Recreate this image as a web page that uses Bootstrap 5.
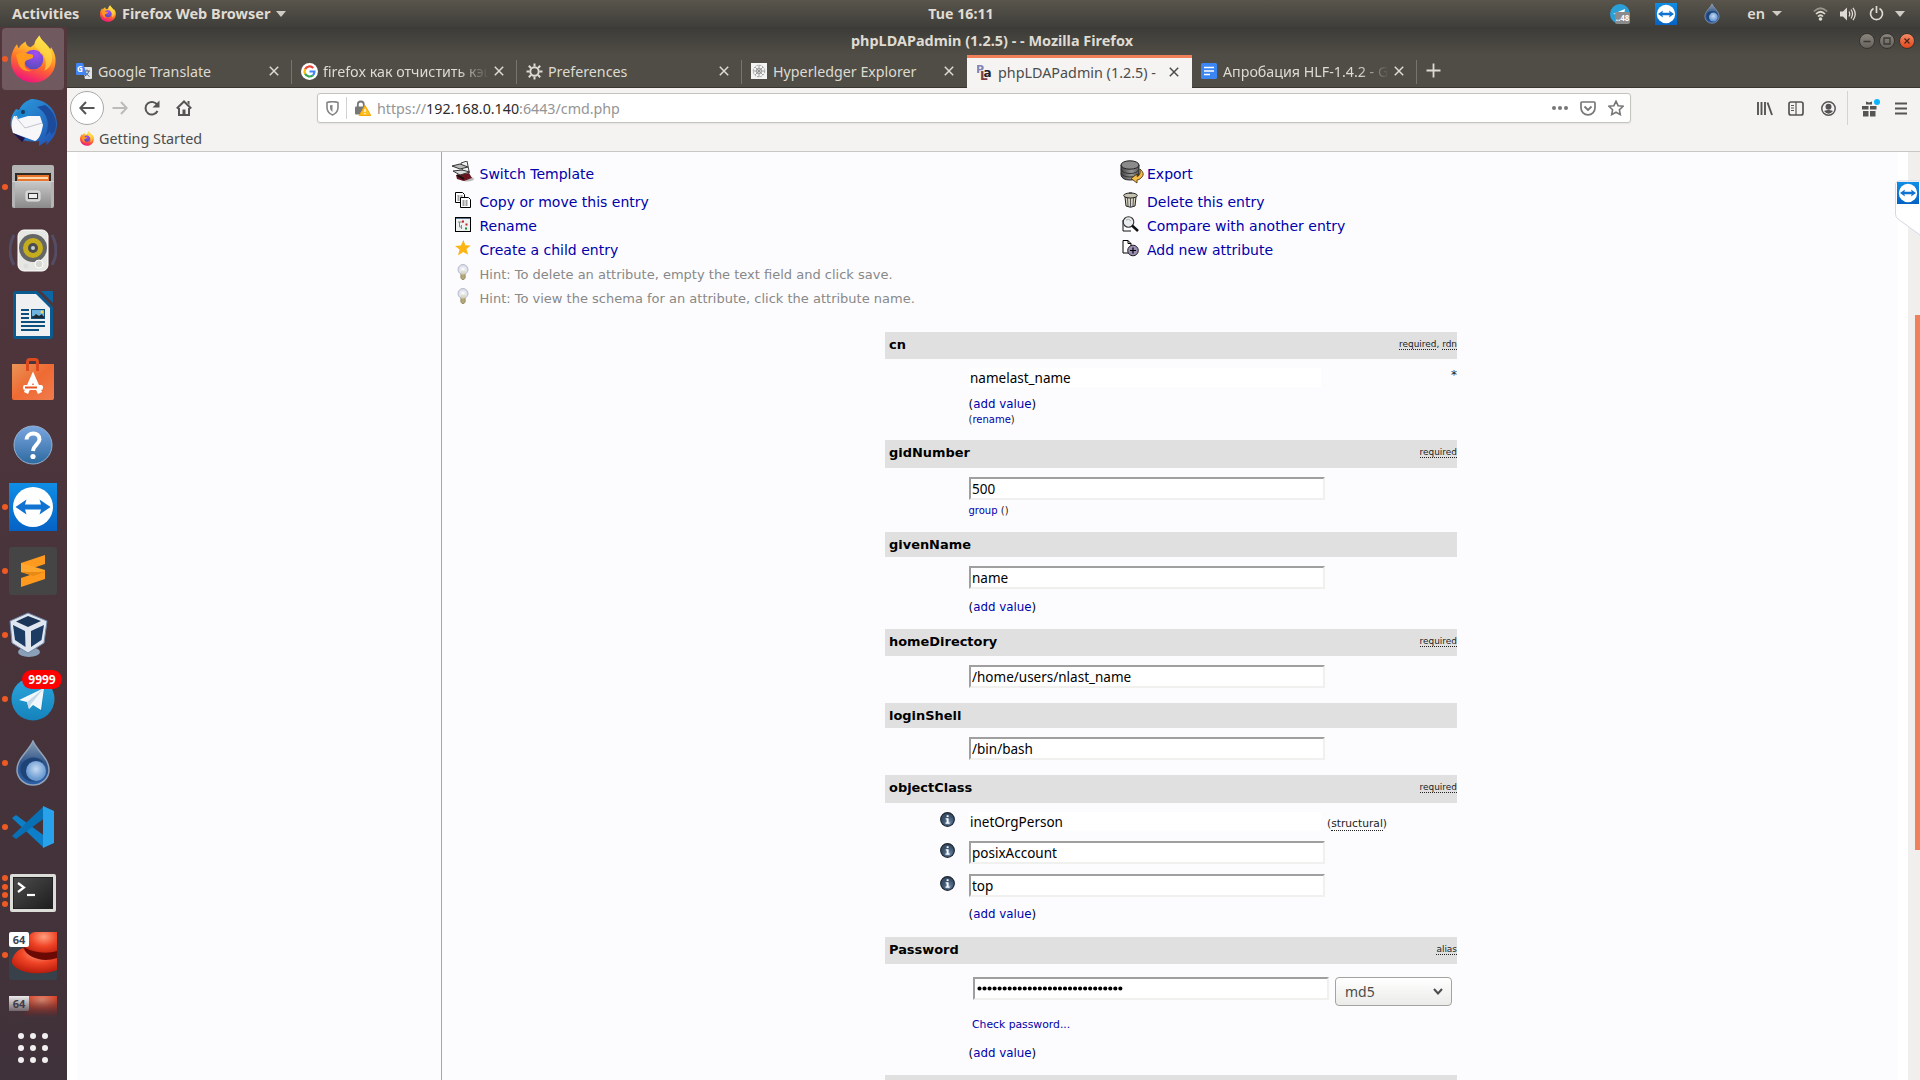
<!DOCTYPE html>
<html lang="en">
<head>
<meta charset="utf-8">
<title>phpLDAPadmin (1.2.5) -</title>
<link href="https://cdn.jsdelivr.net/npm/bootstrap@5.3.0/dist/css/bootstrap.min.css" rel="stylesheet">
<style>
html,body{width:1920px;height:1080px;overflow:hidden}
body{font-family:"Noto Sans","Open Sans",sans-serif;font-size:14.25px;line-height:1.2;color:#4c4c4c;background:#fcfcfe;white-space:nowrap}
svg{display:block;flex:none}
.gnome{height:27px;background:linear-gradient(#59554c,#3f3e3a);color:#e0dcd3;font-weight:700;font-size:14.5px}
.gnome>div,.titlebar>div{flex:1}
.dock{width:67px;background:linear-gradient(#52373c,#4a343b 50%,#40323a);flex:none}
.slot{height:64px;display:flex;align-items:center;justify-content:center;position:relative;padding-right:1px}
.slot.focused::before{content:"";position:absolute;left:2px;top:1px;width:62px;height:62px;border-radius:4px;background:#705a5f}
.slot svg{position:relative}
.pips{position:absolute;left:2px;top:0;height:64px;display:flex;flex-direction:column;justify-content:center;gap:2.5px}
.pips i{width:6px;height:6px;border-radius:50%;background:#ee5a24}
.unread{position:absolute;left:22px;top:3px;width:40px;height:19px;border-radius:9.5px;background:#fd0000;color:#fff;font:700 12px/19px "Noto Sans",sans-serif;text-align:center}
.titlebar{height:28px;background:linear-gradient(#3c3b37,#504d46);color:#dfdbd2;font-weight:700;font-size:14.45px}
.wbtn{width:16px;height:16px;border-radius:50%;background:linear-gradient(#8a867e,#66635c);border:1px solid #36342f}
.wbtn.kill{background:linear-gradient(#f58a66,#e3471b)}
.tabs{height:33px;background:#504d46;border-bottom:1px solid #37352f;color:#dedbd2}
.tab{width:225px;height:32px;position:relative;padding:0 13px 0 9px;flex:none}
.tab:not(.on)::after{content:"";position:absolute;right:0;top:5px;height:24px;width:1px;background:#77746d}
.tab.nosep::after{display:none}
.tab.on{background:#f5f4f2;color:#4c4c4c;height:33px;border-top:3px solid #f0805a;padding-bottom:2px;padding-left:10px}
.tab .cap{width:168px;margin-left:6px;padding-top:1px;overflow:hidden;flex:none;height:22px;line-height:21px}
.tab .fade-end{-webkit-mask-image:linear-gradient(90deg,#000 135px,transparent 166px)}
.tools{height:44px;background:#f4f3f1}
.backbtn{width:34px;height:34px;border-radius:50%;border:1px solid #a9a8a5;background:#fff}
.urlbar{width:1314px;height:30px;border:1px solid #c4c3c0;border-radius:3px;background:#fff;color:#959595;box-shadow:0 1px 2px #0001}
.urlbar b{font-weight:400;color:#2b2b2b}
.bookmarks{height:20px;background:#f4f3f1;border-bottom:1px solid #c9c7c3}
.page{font-family:"DejaVu Sans",sans-serif;color:#000;border-left:10px solid #fff}
.treepane{width:365px;border-right:1px solid #a2a2c4;flex:none}
.act{height:24px;font-size:14px;color:#0000aa;padding-left:8px}
.act.tall{height:32px}
.act .pic{width:26px;margin-right:3.5px;padding-bottom:4px;display:flex;justify-content:center}
.act.hint{font-size:13px;color:#888;padding-top:2px}
.act.hint .pic{padding-bottom:6px}
.acts-l{width:667.5px}
.attrs{width:572px;margin-left:443px}
.ahead{background:#e0e0e0;height:27px;padding:5px 0 0 4px;font-size:12.95px;font-weight:700;line-height:15px}
.ahead small{font-size:8.95px;font-weight:400;line-height:11px;color:#222;padding-top:2px}
.ahead.h28{height:28px}.ahead.h25{height:25px}
.ahead u,.sub u{text-decoration:none;border-bottom:1px dotted #222}
.abody{padding-left:84px;padding-top:9px}
.inp{width:356px;height:23px;border:2px solid;border-color:#9f9f9f #f0f0ee #f0f0ee #9f9f9f;background:#fff;font:13.5px/20px "Noto Sans",sans-serif;padding:0 0 0 1px;color:#000;outline:0;display:block;border-radius:0}
.inp.ro{width:352px;height:19px;border:0;line-height:20px}
.add{font-size:11.85px;line-height:14px;margin-left:-.5px}
.sub{font-size:10px;line-height:14px;color:#222;margin-left:-.5px}
.add a,.sub a{color:#0000aa;text-decoration:none}
.orow{height:23px;margin-bottom:10px;margin-left:-29.5px}
.orow.first{height:19px}
.orow .info{width:29.5px;padding-bottom:5px}
.algo{width:117px;height:29px;border:1px solid #a5a39f;border-radius:4px;background:linear-gradient(#fff,#ebebe9);margin-left:6px;font:14px "Noto Sans",sans-serif;color:#4c4c4c;padding:0 8px 0 9px}
.gutter{width:22px;background:linear-gradient(90deg,#fff 10px,#f0efed 10px);position:relative;flex:none}
.thumb{position:absolute;right:0;top:163px;width:5px;height:535px;background:#f07f5a}
.tvtab{position:absolute;right:0;top:28px}
</style>
<script src="https://cdn.jsdelivr.net/npm/bootstrap@5.3.0/dist/js/bootstrap.bundle.min.js"></script>
</head>
<body class="d-flex flex-column">
<svg width="0" height="0" class="position-absolute">
<defs>
<linearGradient id="gFlame" x1=".75" y1="0" x2=".4" y2="1"><stop offset="0" stop-color="#fff14f"/><stop offset=".35" stop-color="#ffb12b"/><stop offset=".62" stop-color="#ff6b2c"/><stop offset="1" stop-color="#f0157c"/></linearGradient>
<radialGradient id="gGlobe" cx=".6" cy=".2" r=".9"><stop offset="0" stop-color="#a44cf5"/><stop offset="1" stop-color="#4f4cb8"/></radialGradient>
<linearGradient id="gBlue" x1="0" y1="0" x2="0" y2="1"><stop offset="0" stop-color="#0f8ee6"/><stop offset="1" stop-color="#0562c4"/></linearGradient>
<linearGradient id="gBird" x1="0" y1="0" x2="1" y2="1"><stop offset="0" stop-color="#2b9fe0"/><stop offset="1" stop-color="#2150b0"/></linearGradient>
<linearGradient id="gGrey" x1="0" y1="0" x2="0" y2="1"><stop offset="0" stop-color="#c9c9c9"/><stop offset="1" stop-color="#8a8a8a"/></linearGradient>
<linearGradient id="gOrange" x1="0" y1="0" x2="1" y2="1"><stop offset="0" stop-color="#ea9457"/><stop offset=".5" stop-color="#ee6a33"/><stop offset="1" stop-color="#f07c4e"/></linearGradient>
<linearGradient id="gHelp" x1="0" y1="0" x2="0" y2="1"><stop offset="0" stop-color="#7aa6e0"/><stop offset="1" stop-color="#2d6aa0"/></linearGradient>
<linearGradient id="gDrop" x1="0" y1="0" x2="0" y2="1"><stop offset="0" stop-color="#8a9eb5"/><stop offset=".5" stop-color="#2f5488"/><stop offset="1" stop-color="#2b5fa8"/></linearGradient>
<radialGradient id="gSwirl" cx=".5" cy=".4"><stop offset="0" stop-color="#c3daf2"/><stop offset="1" stop-color="#6c9bd2"/></radialGradient>
<linearGradient id="gTele" x1="0" y1="0" x2="0" y2="1"><stop offset="0" stop-color="#2ba5de"/><stop offset="1" stop-color="#1583bb"/></linearGradient>
<radialGradient id="gHat" cx=".6" cy=".2" r=".8"><stop offset="0" stop-color="#ffa080"/><stop offset=".5" stop-color="#f04426"/><stop offset="1" stop-color="#b81c0c"/></radialGradient>
<linearGradient id="gTerm" x1="0" y1="0" x2="1" y2="1"><stop offset="0" stop-color="#4b4b4b"/><stop offset=".5" stop-color="#353535"/><stop offset="1" stop-color="#1d1d1d"/></linearGradient>
<linearGradient id="gDb" x1="0" y1="0" x2="1" y2="0"><stop offset="0" stop-color="#444"/><stop offset=".6" stop-color="#999"/><stop offset="1" stop-color="#555"/></linearGradient>
<radialGradient id="gInfo" cx=".6" cy=".7"><stop offset="0" stop-color="#6f90b2"/><stop offset="1" stop-color="#33496394"/></radialGradient>
<radialGradient id="gBulb"><stop offset="0" stop-color="#fff"/><stop offset="1" stop-color="#cfd6e4"/></radialGradient>
<linearGradient id="gFadeHat" x1="0" y1="0" x2="0" y2="1"><stop offset="0" stop-color="#43323a" stop-opacity=".1"/><stop offset="1" stop-color="#43323a"/></linearGradient>
<symbol id="firefox" viewBox="0 0 46 48">
<path fill="url(#gFlame)" d="M24 9 C25 4 27 3 29 0 C31 5 36 8 40 14 L41 12 C44 17 46 21 45.500 27 C45 39 35 48 23 48 C10 48 0 38 0 26 C0 17 4 12 6 9 C7 11 7 12 8 13 C9 10 12 8 15 6 C15 9 17 11 20 12Z"/>
<circle cx="23" cy="24.500" r="10" fill="url(#gGlobe)"/>
<path fill="#ff9a1f" d="M5 20 C9 16 15 17 18 19 C22 19 24 20 22 23 C19 25 15 24 14 28 C13 33 17 36 22 36 C14 38 8 33 7 27Z"/>
<path fill="#ffe04a" d="M29 0 C31 5 36 8 40 14 C44 24 42 32 34 36 C37 29 35 22 32 18 L30 19 C31 14 25 14 24 9 C25 4 27 3 29 0Z" opacity=".65"/>
</symbol>
<symbol id="teamv" viewBox="0 0 48 48"><rect width="48" height="48" fill="url(#gBlue)"/><circle cx="24" cy="24" r="20" fill="#fff"/><path d="M6.500 24l11-7.500-1.500 5h16l-1.500-5 11 7.500-11 7.500 1.500-5h-16l1.500 5z" fill="#1073d1"/></symbol>
<symbol id="drop" viewBox="0 0 36 46"><path d="M18 1C22 11 34 18 34 30A16 15 0 0 1 2 30C2 18 14 11 18 1Z" fill="url(#gDrop)" stroke="#90a3ba" stroke-width="1.500"/><path d="M30 24A13 12 0 1 0 22 41C10 40 10 24 21 22C26 21 29 22 30 24Z" fill="#1d4377"/><circle cx="21" cy="31" r="10" fill="url(#gSwirl)"/></symbol>
<symbol id="hat" viewBox="0 0 48 48"><rect width="48" height="48" rx="2" fill="#384049"/><path d="M15 18C17 6 20 1 26 0H48V24H18Z" fill="url(#gHat)"/><path d="M15 15C24 21 38 22 48 19V31H20Z" fill="#6b0a05"/><path d="M3 31C2 25 8 18 14 16C19 26 34 31 48 26V38C34 44 8 42 3 31Z" fill="url(#gHat)"/><rect width="20" height="15" rx="2" fill="#fff"/><text x="10" y="11.500" text-anchor="middle" font-family="Noto Sans" font-weight="700" font-size="11" fill="#3b4452">64</text></symbol>
<symbol id="xmark" viewBox="0 0 10 10"><path d="M.800.800l8.400 8.400M9.200.800L.800 9.200" stroke="currentColor" stroke-width="1.500" fill="none"/></symbol>
<symbol id="bulb" viewBox="0 0 12 17"><path d="M3.800 9h4.400v5l-1.200 1.500h-2l-1.200-1.500z" fill="#b5a873" stroke="#77704e" stroke-width=".6"/><circle cx="6" cy="5.500" r="5" fill="url(#gBulb)" stroke="#b4b8c4" stroke-width=".9"/><path d="M5 6.500v4M7 6.500v4" stroke="#d8c070" stroke-width=".7"/></symbol>
<symbol id="info" viewBox="0 0 14 14"><circle cx="7" cy="7" r="6.400" fill="#3c536c"/><circle cx="7" cy="7" r="6.400" fill="url(#gInfo)" stroke="#1b222c" stroke-width="1"/><path d="M6.200 3h1.800v1.600h-1.800zM5.300 5.800h2.700v4h1v1.100h-3.900v-1.100h1.100v-2.900h-.9z" fill="#fff"/></symbol>
</defs></svg>

<header class="gnome d-flex align-items-center flex-shrink-0">
<div class="d-flex align-items-center"><span style="margin-left:12px;width:88px">Activities</span><svg width="16" height="17" style="margin-right:6px"><use href="#firefox"/></svg><span>Firefox Web Browser</span><svg style="margin:1px 0 0 6px" width="10" height="6"><path d="M0 0h10l-5 6z" fill="#cfccc4"/></svg></div>
<span style="font-size:14.2px;padding-left:2px">Tue 16:11</span>
<div class="d-flex align-items-center justify-content-end">
<svg width="20" height="20" viewBox="0 0 20 20"><circle cx="10" cy="10" r="10" fill="#2ba0d8"/><path d="M3 10l12-5-1 6z" fill="#fff"/><rect x="5" y="8" width="15" height="12" rx="2" fill="#8b8b8b"/><text x="12.500" y="17" text-anchor="middle" font-size="8" font-family="Noto Sans" fill="#fff">..48</text></svg>
<svg width="22" height="22" style="margin-left:25px"><use href="#teamv"/></svg>
<svg width="16" height="21" style="margin-left:27px"><use href="#drop"/></svg>
<span style="margin-left:27px;font-weight:600">en</span>
<svg style="margin:0 31px 0 7px" width="10" height="5"><path d="M0 0h10l-5 5z" fill="#cfccc4"/></svg>
<svg width="15" height="14" viewBox="0 0 15 14"><g fill="none" stroke="#dfdbd2" stroke-width="1.700"><path d="M.800 4.500Q7.500-2 14.200 4.500" opacity=".5"/><path d="M3 7Q7.500 2.500 12 7"/><path d="M5 9.500Q7.500 7 10 9.500"/></g><circle cx="7.500" cy="12" r="1.800" fill="#dfdbd2"/></svg>
<svg style="margin-left:12px" width="16" height="14" viewBox="0 0 16 14"><path d="M0 4.500h3l4-4v13l-4-4h-3z" fill="#dfdbd2"/><path d="M9 4.500q1.500 2.500 0 5M11 2.500q3 4.500 0 9M13 .8q4.500 6.200 0 12.400" fill="none" stroke="#dfdbd2" stroke-width="1.300"/></svg>
<svg style="margin-left:13px" width="15" height="15" viewBox="0 0 15 15"><path d="M4.500 2.500a6 6 0 1 0 6 0M7.500 0v7" fill="none" stroke="#dfdbd2" stroke-width="1.700"/></svg>
<svg style="margin:0 15px 0 11px" width="10" height="6"><path d="M0 0h10l-5 6z" fill="#cfccc4"/></svg>
</div>
</header>

<div class="d-flex flex-grow-1" style="min-height:0">
<nav class="dock">
<div class="slot focused"><span class="pips"><i></i></span><svg width="45" height="48"><use href="#firefox"/></svg></div>
<div class="slot"><svg width="48" height="48" viewBox="0 0 48 48"><path d="M10 11C14 3 18 2 22 0C36 0 47 9 48 24C48 34 44 41 37 46L38 42L30 47L30 42C18 44 8 40 6 35C0 30 0 18 7 10Z" fill="url(#gBird)"/><path d="M36 6C45 12 49 22 46 32L42 36L41 32L36 38C42 24 38 14 28 8Z" fill="#1c4b9c"/><path d="M5 17L31 17L34 26C32 36 30 40 26 42L4 34C2 28 2 22 5 17Z" fill="#f7f7f9"/><path d="M6 17L16 29L33 24" fill="none" stroke="#c2c2cc"/><path d="M11 10C18 9 21 13 19 17L9 20L7 14Z" fill="#1e86cf"/><circle cx="14" cy="13" r="2" fill="#1e3a58"/><path d="M4 34L16 39L13 43Z" fill="#231147"/></svg></div>
<div class="slot"><span class="pips"><i></i></span><svg width="42" height="44" viewBox="0 0 42 44"><rect width="42" height="43" rx="2" fill="#b4b4b4"/><rect x="3" y="8" width="36" height="12" fill="#2e2a28"/><rect x="5" y="10" width="32" height="10" fill="#e8742c"/><rect x="6" y="12" width="30" height="2" fill="#fbd7ab"/><rect x="3" y="16" width="36" height="27" fill="url(#gGrey)"/><path d="M0 16.500h42" stroke="#d2d2d2"/><rect x="14" y="26" width="14" height="10" rx="2" fill="#ccc" stroke="#e4e4e4"/><rect x="16.500" y="28.500" width="9" height="5" fill="#eee" stroke="#333"/></svg></div>
<div class="slot"><svg width="48" height="44" viewBox="0 0 48 44"><path d="M5 6Q-3 22 5 36M43 6Q51 22 43 36" stroke="#5a6490" stroke-width="3" fill="none" opacity=".5"/><rect x="9" y="1" width="30" height="41" rx="6" fill="#e6e6e2" stroke="#fff"/><circle cx="24" cy="19" r="14" fill="#656666"/><circle cx="24" cy="19" r="10" fill="#c4ac1d"/><circle cx="24" cy="19" r="5" fill="#4a4c50"/><circle cx="24" cy="19" r="2" fill="#c9cbd0"/><circle cx="30" cy="35" r="4" fill="#d6d6d3" stroke="#fff"/><circle cx="17" cy="37" r="2.500" fill="#ddd"/></svg></div>
<div class="slot"><svg width="40" height="48" viewBox="0 0 40 48"><path d="M3 0H24L40 16V45Q40 48 37 48H3Q0 48 0 45V3Q0 0 3 0Z" fill="#0b5a90"/><path d="M3 3H23L37 17V45H3Z" fill="#eef0f1"/><path d="M28 0H40V12Z" fill="#0b66a3"/><path d="M8 19h8M8 23h8M8 27h8M8 31h24M8 35h24M8 39h18" stroke="#0e4f7d" stroke-width="1.800"/><rect x="18" y="18" width="14" height="10" fill="#0e4f7d"/><rect x="19" y="19" width="12" height="6" fill="#6eb3e0"/><path d="M19 27l4-4 3 2 3-2 2 4z" fill="#1f2a30"/><circle cx="29" cy="21" r="1.500" fill="#f6d64a"/></svg></div>
<div class="slot"><svg width="42" height="43" viewBox="0 0 42 43"><path d="M0 6H42V40Q42 42 40 42H2Q0 42 0 40Z" fill="url(#gOrange)"/><path d="M15.500 13V4Q15.500 1.500 18 1.500H23Q25.500 1.500 25.500 4V13" fill="none" stroke="#dd4a1d" stroke-width="3"/><path d="M14 35L21 19L28 35" fill="none" stroke="#fff" stroke-width="4.500"/><rect x="11" y="27" width="20" height="5" rx="2" fill="#fff"/><path d="M13 29.500h12" stroke="#e95420" stroke-width="2"/></svg></div>
<div class="slot"><svg width="40" height="40" viewBox="0 0 40 40" style="margin-top:3px"><circle cx="20" cy="20" r="19" fill="url(#gHelp)" stroke="#94b3d2"/><path d="M13.500 14.500C14 6.500 27 6.500 26.500 14.500C26.300 19 20.500 20 20 26" fill="none" stroke="#fff" stroke-width="4"/><circle cx="20" cy="31.500" r="2.600" fill="#fff"/></svg></div>
<div class="slot"><span class="pips"><i></i></span><svg width="48" height="48"><use href="#teamv"/></svg></div>
<div class="slot"><span class="pips"><i></i></span><svg width="48" height="48" viewBox="0 0 48 48"><rect width="48" height="48" rx="3" fill="#454545"/><path d="M36 8V17L12 25V16Z" fill="#ff9a1e"/><path d="M12 16L36 23V32L12 25Z" fill="#ffa62e"/><path d="M36 23V32L12 40V31Z" fill="#ff9a1e"/><path d="M12 25L24 29L36 25" fill="#e88a14"/></svg></div>
<div class="slot"><span class="pips"><i></i></span><svg style="margin-right:8px" width="40" height="46" viewBox="0 0 40 46"><ellipse cx="20" cy="40" rx="11" ry="5" fill="#8aa0b8"/><path d="M19 1L38 9L35 31L19 41L3 31L1 9Z" fill="#dfe6f0" stroke="#7187a8"/><path d="M19 4L32 9L19 15L7 9.500Z" fill="#1a3557"/><path d="M4 13L16 19L16.500 35L6 28Z" fill="#1d3c63"/><path d="M35 13L22 19L22 35L32.500 28Z" fill="#1d3c63"/></svg></div>
<div class="slot"><span class="pips"><i></i></span><svg width="44" height="44" viewBox="0 0 44 44"><circle cx="22" cy="22" r="21.500" fill="url(#gTele)"/><path d="M33 11L31 35L20 25Z" fill="#0f73a6" opacity=".4"/><path d="M8 23L33 11L30 33L22 28L18 32L16 25Z" fill="#f2f7fb"/><path d="M16 25L33 11L20 27L18 32Z" fill="#c4daea"/></svg><span class="unread">9999</span></div>
<div class="slot"><span class="pips"><i></i></span><svg width="36" height="46"><use href="#drop"/></svg></div>
<div class="slot"><span class="pips"><i></i></span><svg width="42" height="42" viewBox="0 0 42 42"><path d="M0 12L4 9L34 31L32 42Z" fill="#0d7fc9"/><path d="M0 30L4 33L34 11L32 0Z" fill="#0871b6"/><path d="M31 0L42 5V37L31 42Z" fill="#29a2ec"/></svg></div>
<div class="slot"><span class="pips"><i></i><i></i><i></i><i></i></span><svg style="margin-top:4px" width="46" height="38" viewBox="0 0 46 38"><rect width="46" height="38" rx="2" fill="#dcdcd8"/><rect x="3.500" y="3.500" width="39" height="31" fill="url(#gTerm)" stroke="#222"/><path d="M8 9l6 4.500L8 18" fill="none" stroke="#fff" stroke-width="2.200"/><path d="M17 21h8" stroke="#fff" stroke-width="2.200"/></svg></div>
<div class="slot"><span class="pips"><i></i></span><svg width="48" height="48" style="margin-top:2px"><use href="#hat"/></svg></div>
<div class="overflow-hidden position-relative" style="height:32px;padding:9px 0 0 9px"><svg width="48" height="21" viewBox="0 0 48 21"><g><rect width="20" height="15" fill="#fff"/><path d="M20 0H48V21H10L20 14Z" fill="url(#gHat)"/><text x="10" y="11.500" text-anchor="middle" font-family="Noto Sans" font-weight="700" font-size="11" fill="#3b4452">64</text></g><rect width="48" height="21" fill="url(#gFadeHat)"/></svg></div>
<div class="d-flex justify-content-center" style="padding:14px 1px 0 0"><svg width="30" height="30" viewBox="0 0 30 30" fill="#f1eff0"><circle cx="3" cy="3" r="3"/><circle cx="15" cy="3" r="3"/><circle cx="27" cy="3" r="3"/><circle cx="3" cy="15" r="3"/><circle cx="15" cy="15" r="3"/><circle cx="27" cy="15" r="3"/><circle cx="3" cy="27" r="3"/><circle cx="15" cy="27" r="3"/><circle cx="27" cy="27" r="3"/></svg></div>
</nav>

<div class="d-flex flex-column flex-grow-1" style="min-width:0">
<div class="titlebar d-flex align-items-center flex-shrink-0">
<div></div><span style="padding-left:2px">phpLDAPadmin (1.2.5) - - Mozilla Firefox</span>
<div class="d-flex justify-content-end gap-1" style="padding-right:5px">
<svg class="wbtn" viewBox="0 0 14 14"><path d="M3.500 7.500h7" stroke="#3a3833" stroke-width="1.300"/></svg><svg class="wbtn" viewBox="0 0 14 14"><path d="M4 4h6v6h-6z" fill="none" stroke="#3a3833" stroke-width="1.300"/></svg><svg class="wbtn kill" viewBox="0 0 14 14"><path d="M4.500 4.500l5 5m0-5l-5 5" stroke="#4c2415" stroke-width="1.300"/></svg></div>
</div>
<div class="tabs d-flex flex-shrink-0">
<div class="tab d-flex align-items-center"><svg width="16" height="16" viewBox="0 0 16 16"><path d="M6 4h9q1 0 1 1v10q0 1-1 1h-6z" fill="#dfe3e8"/><path d="M8 8h6M11 6.500v1.500M13 8q-1 4-5 5.500M9.500 9.500q2 3 4 4" stroke="#5b6572" fill="none"/><path d="M1 0h6l4 12H1q-1 0-1-1V1q0-1 1-1z" fill="#4285f4"/><text x="1" y="9" font-size="8" font-weight="700" font-family="Noto Sans" fill="#fff">G</text></svg><span class="cap">Google Translate</span><svg class="ms-auto" width="10" height="10"><use href="#xmark"/></svg></div>
<div class="tab d-flex align-items-center"><svg width="17" height="17" viewBox="0 0 17 17"><circle cx="8.500" cy="8.500" r="8.500" fill="#fff"/><g fill="none" stroke-width="2.200"><path d="M12.200 5A5 5 0 0 0 4.100 6.200" stroke="#ea4335"/><path d="M4.100 6.200A5 5 0 0 0 4.100 10.800" stroke="#fbbc05"/><path d="M4.100 10.800A5 5 0 0 0 11.800 12.300" stroke="#34a853"/><path d="M11.800 12.300A5 5 0 0 0 13.500 8.500H8.500" stroke="#4285f4"/></g></svg><span class="cap fade-end" style="margin-left:5px">firefox как отчистить кэш</span><svg class="ms-auto" width="10" height="10"><use href="#xmark"/></svg></div>
<div class="tab d-flex align-items-center"><svg width="17" height="17" viewBox="-8.500 -8.500 17 17"><g fill="none" stroke="#dedbd2"><circle r="4.200" stroke-width="2"/><g stroke-width="2"><path d="M0-8v3M0 8v-3M-8 0h3M8 0h-3M-5.700-5.700l2.200 2.200M5.700 5.700l-2.200-2.200M5.700-5.700l-2.200 2.200M-5.700 5.700l2.200-2.200"/></g></g></svg><span class="cap" style="margin-left:5px">Preferences</span><svg class="ms-auto" width="10" height="10"><use href="#xmark"/></svg></div>
<div class="tab nosep d-flex align-items-center"><svg width="16" height="16" viewBox="0 0 16 16"><rect width="16" height="16" fill="#f4f4f4"/><g stroke="#8d8d8d" fill="none" stroke-width=".8"><circle cx="8" cy="8" r="5.800" stroke-dasharray="2 1"/><circle cx="8" cy="8" r="2.800"/><path d="M8 2v12M2 8h12M4 4l8 8M12 4l-8 8"/></g></svg><span class="cap">Hyperledger Explorer</span><svg class="ms-auto" width="10" height="10"><use href="#xmark"/></svg></div>
<div class="tab on d-flex align-items-center"><svg width="15" height="16" viewBox="0 0 15 16" font-family="DejaVu Sans" font-weight="700"><text x="-1" y="8.500" font-size="11" fill="#8583b3">P</text><text x="3" y="16" font-size="12" fill="#7c3b44">L</text><text x="6.500" y="13" font-size="12" fill="#26222a">a</text></svg><span class="cap" style="font-size:14.35px">phpLDAPadmin (1.2.5) -</span><svg class="ms-auto" width="10" height="10"><use href="#xmark"/></svg></div>
<div class="tab d-flex align-items-center"><svg width="16" height="16" viewBox="0 0 16 16"><rect width="16" height="16" rx="1.500" fill="#3b86f2"/><path d="M3 4.500h10M3 8h10M3 11.500h6" stroke="#fff" stroke-width="1.600"/></svg><span class="cap fade-end">Апробация HLF-1.4.2 - G</span><svg class="ms-auto" width="10" height="10"><use href="#xmark"/></svg></div>
<svg style="margin:8px 0 0 9px" width="15" height="15"><path d="M7.500.5v14M.5 7.500h14" stroke="#dedbd2" stroke-width="1.800"/></svg>
</div>

<div class="tools d-flex align-items-center flex-shrink-0" style="padding:0 13px 4px 3px">
<div class="backbtn d-flex align-items-center justify-content-center"><svg width="16" height="14" viewBox="0 0 16 14"><path d="M15.500 7H1.500M7 1L1.300 7 7 13" fill="none" stroke="#555" stroke-width="2"/></svg></div>
<svg style="margin-left:8px" width="16" height="14" viewBox="0 0 16 14"><path d="M.5 7h14M9 1l5.700 6L9 13" fill="none" stroke="#bcbbb8" stroke-width="2"/></svg>
<svg style="margin-left:16px" width="16" height="16" viewBox="0 0 16 16"><path d="M13.500 5.500A6.300 6.300 0 1 0 13.500 11" fill="none" stroke="#555" stroke-width="2"/><path d="M15.500 .5v7h-7z" fill="#555"/></svg>
<svg style="margin-left:16px" width="16" height="16" viewBox="0 0 16 16"><path d="M.8 8.500L8 1.500l7.200 7" fill="none" stroke="#555" stroke-width="2"/><path d="M3 8v7h10V8" fill="none" stroke="#555" stroke-width="2"/><path d="M6.500 9.500h3v5.500h-3zM11.500 1h2v4l-2-2z" fill="#555"/></svg>
<div class="urlbar d-flex align-items-center" style="margin-left:125px;padding:0 6px 0 8px">
<svg width="13" height="15" viewBox="0 0 13 15"><path d="M1 1.500Q6.500-.3 12 1.500V7Q11.500 12 6.500 14Q1.500 12 1 7Z" fill="none" stroke="#858585" stroke-width="1.600"/><path d="M6.500 4v7Q4 9.500 4 7V4.300z" fill="#858585"/></svg>
<span style="width:1px;height:22px;background:#d2d1ce;margin:0 8px 0 7px"></span>
<svg width="16" height="16" viewBox="0 0 16 16"><path d="M2.800 7V4.500a3 3 0 0 1 6 0V7" fill="none" stroke="#777" stroke-width="1.800"/><rect x="0" y="6.500" width="11" height="8" rx="1" fill="#777"/><path d="M10 5.500l5.800 10H4.200z" fill="#ffbf1f" stroke="#f5a700"/><path d="M10 9v3M10 13v1.200" stroke="#fff" stroke-width="1.400"/></svg>
<span style="margin-left:6px;padding-top:1px">https://<b>192.168.0.140</b>:6443/cmd.php</span>
<svg class="ms-auto" width="16" height="4" fill="#777"><circle cx="2" cy="2" r="2"/><circle cx="8" cy="2" r="2"/><circle cx="14" cy="2" r="2"/></svg>
<svg style="margin-left:12px" width="16" height="15" viewBox="0 0 16 15"><path d="M2 1h12q1 0 1 1v5a7 6.800 0 0 1-14 0V2q0-1 1-1z" fill="none" stroke="#777" stroke-width="1.700"/><path d="M4.500 5.500L8 9l3.500-3.500" fill="none" stroke="#777" stroke-width="1.800"/></svg>
<svg style="margin-left:12px" width="16" height="16" viewBox="0 0 16 16"><path d="M8 1.200l2.100 4.500 4.900.6-3.600 3.400.9 4.900L8 12.200l-4.300 2.400.9-4.900L1 6.300l4.900-.6z" fill="none" stroke="#777" stroke-width="1.600"/></svg>
</div>
<svg class="ms-auto" width="16" height="15" viewBox="0 0 16 15"><path d="M1 1v13M4.500 1v13M8 1v13M10.500 1.500l4.500 12.500" stroke="#555" stroke-width="1.900"/></svg>
<svg style="margin-left:15px" width="16" height="15" viewBox="0 0 16 15"><rect x="1" y="1" width="14" height="13" rx="2" fill="none" stroke="#555" stroke-width="1.700"/><path d="M8 1v13M3 4.500h3M3 7h3M3 9.500h3" stroke="#555" stroke-width="1.200"/></svg>
<svg style="margin-left:17px" width="15" height="15" viewBox="0 0 15 15"><circle cx="7.500" cy="7.500" r="6.700" fill="none" stroke="#555" stroke-width="1.500"/><circle cx="7.500" cy="5.800" r="3" fill="#555"/><path d="M3 10Q7.500 8 12 10Q7.500 15.500 3 10Z" fill="#555"/></svg>
<span style="width:1px;height:34px;background:#d6d4d0;margin:0 14px 0 11px"></span>
<svg width="20" height="18" viewBox="0 0 20 18"><path d="M0 7h6.500v3.500H0zM8 7h6.500v3.500H8zM1 12h5.500v5.500h-5.500zM8 12h5.500v5.500H8zM4 2.500l3 1 3-1v3H4z" fill="#555"/><circle cx="15" cy="3" r="3" fill="#0ab4ff"/></svg>
<svg style="margin-left:13px" width="12" height="13"><path d="M0 1.500h12M0 6.500h12M0 11.500h12" stroke="#555" stroke-width="2"/></svg>
</div>
<div class="bookmarks d-flex align-items-start flex-shrink-0" style="padding-left:13px"><svg width="14" height="15" style="margin-top:-1px"><use href="#firefox"/></svg><span style="margin-left:5px;margin-top:-2px;font-size:14.35px">Getting Started</span></div>

<main class="page d-flex flex-grow-1" style="min-height:0">
<aside class="treepane"></aside>
<section class="flex-grow-1 overflow-hidden">
<div class="d-flex" style="padding-top:6px;height:180px">
<div class="acts-l">
<div class="act tall d-flex align-items-center"><span class="pic" style="padding-bottom:5px"><svg width="23" height="21" viewBox="0 0 23 21"><ellipse cx="15" cy="18" rx="7" ry="2.500" fill="#bbb"/><path d="M4 14L17 12L20 17L12 20L5 18Z" fill="#6a1620"/><path d="M9 2L15 0L17 10L11 13Z" fill="#f2f2f2" stroke="#444"/><path d="M0 5L8 3L16 6L8 8Z" fill="#bbb" stroke="#333"/><path d="M1 10L10 9L18 11L8 14Z" fill="#ddd" stroke="#333"/><path d="M5 14L12 18" stroke="#111" stroke-width="2"/></svg></span>Switch Template</div>
<div class="act d-flex align-items-center"><span class="pic"><svg width="16" height="16" viewBox="0 0 16 16" fill="#fff" stroke="#000"><path d="M.5.500h7l2 2v8h-9z"/><path d="M2.500 4h5M2.500 6h3M2.500 8h3" stroke-dasharray="2 1" stroke="#444"/><path d="M5.500 5.500h8l2 2v8h-10z"/><path d="M7.500 9h6M7.500 11h6M7.500 13h6" stroke-dasharray="2 1" stroke="#444"/></svg></span>Copy or move this entry</div>
<div class="act d-flex align-items-center"><span class="pic"><svg width="16" height="15" viewBox="0 0 16 15"><rect x=".5" y=".5" width="15" height="14" fill="#eef2f1" stroke="#000"/><path d="M1 1.500h14" stroke="#5a7391"/><path d="M3 5h5M4.500 5v5h2M6.500 8v4" stroke="#888" fill="none"/><path d="M7 3.500h2v2H7zM10.500 6.500h2v2h-2z" fill="#c22"/><path d="M10 10.500h2v2h-2z" fill="#283"/></svg></span>Rename</div>
<div class="act d-flex align-items-center"><span class="pic"><svg width="16" height="16" viewBox="0 0 16 16"><path d="M8.500 0l1.800 5.200 5.500.3-4.300 3.500 1.600 5.800L8.200 12 3 15.500l1.600-6L0 6l5.800-.6z" fill="#fdb515"/></svg></span>Create a child entry</div>
<div class="act hint d-flex align-items-center"><span class="pic"><svg width="12" height="17"><use href="#bulb"/></svg></span>Hint: To delete an attribute, empty the text field and click save.</div>
<div class="act hint d-flex align-items-center"><span class="pic"><svg width="12" height="17"><use href="#bulb"/></svg></span>Hint: To view the schema for an attribute, click the attribute name.</div>
</div>
<div>
<div class="act tall d-flex align-items-center"><span class="pic" style="padding-left:3px"><svg width="24" height="24" viewBox="0 0 24 24"><path d="M1 5V15Q2 20 10 20Q18 20 19 15V5Z" fill="url(#gDb)" stroke="#222"/><ellipse cx="10" cy="5" rx="9" ry="4.200" fill="#8b8b8b" stroke="#222"/><path d="M1 9.500Q3 13.500 10 13.500T19 9.500M1 13Q3 17 10 17T19 13" fill="none" stroke="#333"/><path d="M20 9q6 5 1 9-2 2-4 2V23l-6-4.500 6-4.500v2.500q4-1 3-7.500z" fill="#f5bb48" stroke="#3d2b08" stroke-width=".8"/></svg></span>Export</div>
<div class="act d-flex align-items-center"><span class="pic"><svg width="15" height="16" viewBox="0 0 15 16"><path d="M2 5h11l-1 9q-4.500 2.500-9 0z" fill="#d8d4c2" stroke="#222"/><path d="M4.500 6l.5 8M7.500 6v9M10.500 6l-.5 8" stroke="#555"/><ellipse cx="7.500" cy="3.500" rx="6.800" ry="2.500" fill="#c6c2b0" stroke="#222"/><path d="M6 1h3" stroke="#222"/></svg></span>Delete this entry</div>
<div class="act d-flex align-items-center"><span class="pic"><svg width="17" height="16" viewBox="0 0 17 16"><path d="M1 4v11h8" fill="#fff" stroke="#111"/><circle cx="6.500" cy="6" r="5.300" fill="#e9ecef" stroke="#333" stroke-width="1.100"/><path d="M4 4q3-2 5 1" stroke="#aaa" fill="none"/><path d="M10 9.500l6 5.500" stroke="#111" stroke-width="2.500"/></svg></span>Compare with another entry</div>
<div class="act d-flex align-items-center"><span class="pic"><svg width="17" height="17" viewBox="0 0 17 17"><path d="M1 .500h5l3 3V13H1z" fill="#fff" stroke="#000"/><path d="M6 .500v3h3" fill="none" stroke="#000"/><circle cx="11" cy="10.500" r="5.300" fill="#9a8fb3" stroke="#222"/><path d="M11 7.500v6M8 10.500h6" stroke="#000" stroke-width="1.200"/></svg></span>Add new attribute</div>
</div>
</div>

<div class="attrs">
<div class="ahead d-flex justify-content-between"><span>cn</span><small><u>required</u>, <u>rdn</u></small></div>
<div class="abody" style="height:81px"><div class="d-flex justify-content-between"><div class="inp ro">namelast_name</div><span class="sub" style="font-size:12px">*</span></div><div class="add" style="margin-top:10px">(<a href="#">add value</a>)</div><div class="sub" style="margin-top:2px">(<a href="#">rename</a>)</div></div>
<div class="ahead h28 d-flex justify-content-between"><span>gidNumber</span><small><u>required</u></small></div>
<div class="abody" style="height:64px"><input class="inp" value="500"><div class="sub" style="margin-top:4px"><a href="#">group</a> ()</div></div>
<div class="ahead h25">givenName</div>
<div class="abody" style="height:72px"><input class="inp" value="name"><div class="add" style="margin-top:11px">(<a href="#">add value</a>)</div></div>
<div class="ahead d-flex justify-content-between"><span>homeDirectory</span><small><u>required</u></small></div>
<div class="abody" style="height:47px"><input class="inp" value="/home/users/nlast_name"></div>
<div class="ahead h25">loginShell</div>
<div class="abody" style="height:47px"><input class="inp" value="/bin/bash"></div>
<div class="ahead h28 d-flex justify-content-between"><span>objectClass</span><small><u>required</u></small></div>
<div class="abody" style="height:134px">
<div class="orow first d-flex align-items-center"><span class="info"><svg width="15" height="15"><use href="#info"/></svg></span><div class="inp ro">inetOrgPerson</div><span class="sub" style="margin-left:6px;font-size:10.7px;line-height:13px;padding-top:3px">(<u>structural</u>)</span></div>
<div class="orow d-flex align-items-center"><span class="info"><svg width="15" height="15"><use href="#info"/></svg></span><input class="inp" value="posixAccount"></div>
<div class="orow d-flex align-items-center"><span class="info"><svg width="15" height="15"><use href="#info"/></svg></span><input class="inp" value="top"></div>
<div class="add">(<a href="#">add value</a>)</div></div>
<div class="ahead d-flex justify-content-between"><span>Password</span><small><u>alias</u></small></div>
<div class="abody" style="height:111px;padding-top:13px"><div class="d-flex ms-1"><div class="inp d-flex align-items-center"><svg width="147" height="5" style="margin-left:1px"><path d="M2.500 2.500H147" stroke="#000" stroke-width="4.200" stroke-linecap="round" stroke-dasharray="0 5.030"/></svg></div><div class="algo d-flex align-items-center justify-content-between">md5<svg width="10" height="7"><path d="M1 1l4 4.500L9 1" fill="none" stroke="#4c4c4c" stroke-width="2"/></svg></div></div>
<div class="sub" style="margin:12px 0 0 3px;font-size:10.8px"><a href="#">Check password...</a></div><div class="add" style="margin-top:14px">(<a href="#">add value</a>)</div></div>
<div class="ahead"></div>
</div>
</section>
<div class="gutter"><span class="thumb"></span><svg class="tvtab" width="25" height="56" viewBox="0 0 25 56"><path d="M25 1H5Q.5 1 .5 5V34Q.5 37 3 39L25 55" fill="#fff" stroke="#d5d7e2"/><svg x="2" y="2" width="22" height="22"><use href="#teamv"/></svg></svg></div>
</main>
</div>
</div>
</body>
</html>
